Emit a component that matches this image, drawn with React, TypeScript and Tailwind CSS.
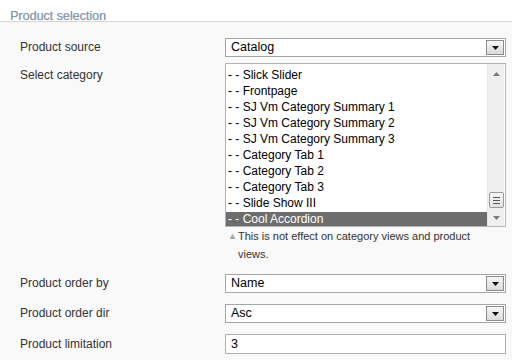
const categories = [
  "- - Slick Slider",
  "- - Frontpage",
  "- - SJ Vm Category Summary 1",
  "- - SJ Vm Category Summary 2",
  "- - SJ Vm Category Summary 3",
  "- - Category Tab 1",
  "- - Category Tab 2",
  "- - Category Tab 3",
  "- - Slide Show III",
  "- - Cool Accordion",
];

const DropButton = () => (
  <div className="w-[18px] self-stretch border border-[#8c8c8c] bg-gradient-to-b from-[#f6f6f6] to-[#dadada] flex items-center justify-center">
    <svg width="7" height="4" viewBox="0 0 7 4">
      <path d="M0 0h7L3.5 4z" fill="#111" />
    </svg>
  </div>
);

const Select = ({ value }: { value: string }) => (
  <div className="h-[19px] w-[281px] border border-[#a6a6a6] bg-white flex items-stretch p-[1px]">
    <span className="flex-1 pl-[4px] text-[12.5px] leading-[15px] text-black">{value}</span>
    <DropButton />
  </div>
);

const Label = ({ children, pt }: { children: string; pt: string }) => (
  <div className={`w-[225px] shrink-0 pl-[20px] text-[12px] leading-[14px] text-[#333] ${pt}`}>{children}</div>
);

export default function App() {
  return (
    <div className="w-[512px] h-[360px] overflow-hidden bg-[#f9f9f9] font-['Liberation_Sans',Arial,sans-serif]">
      <div className="h-[22px] bg-white border-b border-[#d4d4d4] pl-[10px] pt-[3px]">
        <span className="text-[12.5px] leading-[14px] text-[#8396a8] [text-shadow:0.5px_0_0_#b9c6d2]">
          Product selection
        </span>
      </div>

      <div className="flex mt-[16px]">
        <Label pt="pt-[2px]">Product source</Label>
        <Select value="Catalog" />
      </div>

      <div className="flex mt-[6px]">
        <Label pt="pt-[5px]">Select category</Label>
        <div className="w-[281px]">
          <div className="h-[164px] border border-[#b5b5b5] bg-white flex overflow-hidden">
            <div className="flex-1 pt-[4px]">
              {categories.map((c, i) => (
                <div
                  key={c}
                  className={`h-[16px] pl-[2px] text-[12px] leading-[15px] ${
                    i === categories.length - 1 ? "bg-[#6d6d6d] text-white" : "text-black"
                  }`}
                >
                  {c}
                </div>
              ))}
            </div>
            <div className="w-[17px] mr-[1px] bg-[#efefef] border-l border-[#e6e6e6] flex flex-col items-center">
              <div className="h-[18px] flex items-center justify-center mt-[1px]">
                <svg width="7" height="4" viewBox="0 0 7 4">
                  <path d="M3.5 0L7 4H0z" fill="#7a7a7a" />
                </svg>
              </div>
              <div className="flex-1" />
              <div className="w-[15px] h-[16px] mb-[1px] border border-[#9a9a9a] rounded-[2px] bg-gradient-to-b from-[#f7f7f7] to-[#e2e2e2] flex flex-col items-center justify-center gap-[2px]">
                <div className="w-[7px] h-[1px] bg-[#555]" />
                <div className="w-[7px] h-[1px] bg-[#555]" />
                <div className="w-[7px] h-[1px] bg-[#555]" />
              </div>
              <div className="h-[17px] flex items-center justify-center">
                <svg width="7" height="4" viewBox="0 0 7 4">
                  <path d="M0 0h7L3.5 4z" fill="#7a7a7a" />
                </svg>
              </div>
            </div>
          </div>
          <div className="flex text-[11px] leading-[18px] text-[#333] pl-[3px] pr-[20px]">
            <span className="text-[9px] text-[#a6a6a6] w-[10px] shrink-0">▲</span>
            <span>This is not effect on category views and product views.</span>
          </div>
        </div>
      </div>

      <div className="flex mt-[11px]">
        <Label pt="pt-[2px]">Product order by</Label>
        <Select value="Name" />
      </div>

      <div className="flex mt-[11px]">
        <Label pt="pt-[2px]">Product order dir</Label>
        <Select value="Asc" />
      </div>

      <div className="flex mt-[11px]">
        <Label pt="pt-[3px]">Product limitation</Label>
        <div className="h-[20px] w-[281px] border border-[#b0b0b0] bg-white pl-[5px] text-[12.5px] leading-[18px] text-black">
          3
        </div>
      </div>
    </div>
  );
}
